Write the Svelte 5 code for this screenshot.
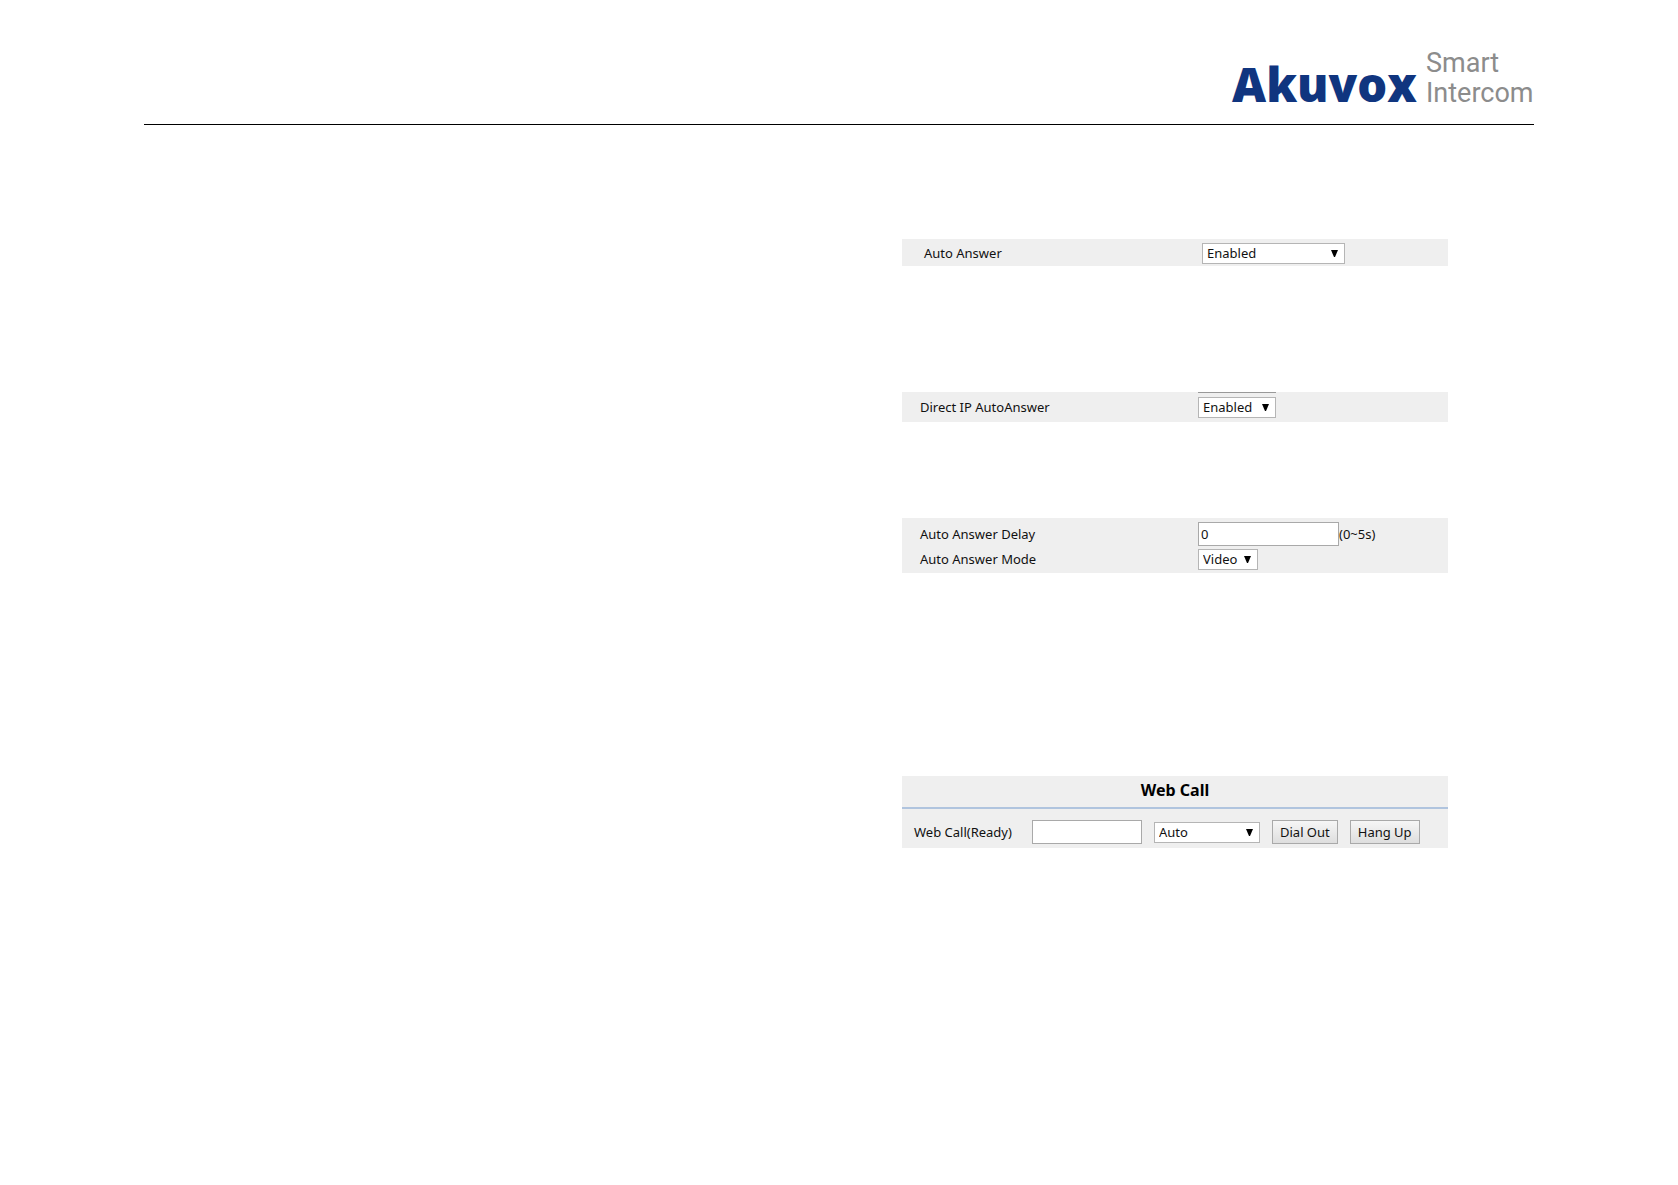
<script lang="ts">
	let autoAnswer = $state('Enabled');
	let directIp = $state('Enabled');
	let delay = $state('0');
	let mode = $state('Video');
	let callTarget = $state('');
	let account = $state('Auto');
</script>

{#snippet arrow()}
	<svg class="arrow" viewBox="0 0 7 7" aria-hidden="true">
		<path d="M0 0h7L4 7H3z" />
	</svg>
{/snippet}

<header class="page-header">
	<svg class="logo" viewBox="0 0 304 68" role="img" aria-label="Akuvox Smart Intercom">
		<text class="brand" x="2" y="58">Akuvox</text>
		<text class="tagline" x="196" y="28">Smart</text>
		<text class="tagline" x="196" y="58">Intercom</text>
	</svg>
</header>

<main class="content">
	<section class="panel auto-answer">
		<div class="row">
			<label for="auto-answer">Auto Answer</label>
			<span class="select wide">
				<select id="auto-answer" bind:value={autoAnswer}>
					<option>Enabled</option>
					<option>Disabled</option>
				</select>
				{@render arrow()}
			</span>
		</div>
	</section>

	<section class="panel direct-ip">
		<div class="edge"></div>
		<div class="row">
			<label for="direct-ip">Direct IP AutoAnswer</label>
			<span class="select medium">
				<select id="direct-ip" bind:value={directIp}>
					<option>Enabled</option>
					<option>Disabled</option>
				</select>
				{@render arrow()}
			</span>
		</div>
	</section>

	<section class="panel answer-options">
		<div class="row">
			<label for="delay">Auto Answer Delay</label>
			<span class="field">
				<input id="delay" type="text" bind:value={delay} />
				<span>(0~5s)</span>
			</span>
		</div>
		<div class="row">
			<label for="mode">Auto Answer Mode</label>
			<span class="select small">
				<select id="mode" bind:value={mode}>
					<option>Video</option>
					<option>Audio</option>
				</select>
				{@render arrow()}
			</span>
		</div>
	</section>

	<section class="panel web-call">
		<h2>Web Call</h2>
		<form class="call-row" onsubmit={(e) => e.preventDefault()}>
			<label for="call-target">Web Call(Ready)</label>
			<input id="call-target" type="text" bind:value={callTarget} />
			<span class="select account">
				<select aria-label="Account" bind:value={account}>
					<option>Auto</option>
					<option>Account1</option>
					<option>Account2</option>
				</select>
				{@render arrow()}
			</span>
			<button type="submit">Dial Out</button>
			<button type="button">Hang Up</button>
		</form>
	</section>
</main>

<style>
	:global(body) {
		margin: 0;
		background: #fff;
	}
	.page-header {
		display: flex;
		justify-content: flex-end;
		margin: 0 144px;
		padding: 44px 0 12px;
		border-bottom: 1px solid #000;
	}
	.logo {
		display: block;
		width: 304px;
		height: 68px;
		overflow: visible;
	}
	.brand {
		font-family: "Open Sans", sans-serif;
		font-size: 47px;
		font-weight: 800;
		fill: #10357f;
	}
	.tagline {
		font-family: Roboto, sans-serif;
		font-size: 27px;
		fill: #8c8c8c;
	}
	.content {
		width: 546px;
		margin: 114px 230px 0 auto;
		font-family: "Noto Sans", sans-serif;
		font-size: 13px;
		line-height: 19px;
		color: #111;
	}
	.panel {
		box-sizing: border-box;
		padding-left: 18px;
		background: #efefef;
	}
	.row {
		display: grid;
		grid-template-columns: 278px 1fr;
		align-items: center;
	}
	.auto-answer {
		padding: 4px 0 2px 22px;
		margin-bottom: 126px;
	}
	.direct-ip {
		padding-bottom: 4px;
		margin-bottom: 96px;
	}
	.edge {
		width: 78px;
		height: 1px;
		margin: 0 0 4px 278px;
		background: #999;
	}
	.answer-options {
		display: grid;
		gap: 3px;
		padding-top: 4px;
		padding-bottom: 3px;
		margin-bottom: 203px;
	}
	.field {
		display: flex;
		align-items: center;
	}
	.select {
		display: inline-grid;
		align-items: center;
	}
	.wide {
		width: 143px;
	}
	.medium {
		width: 78px;
	}
	.small {
		width: 60px;
	}
	.account {
		width: 106px;
	}
	select,
	.arrow {
		grid-area: 1 / 1;
	}
	select,
	input,
	button {
		box-sizing: border-box;
		margin: 0;
		font: inherit;
		color: inherit;
		border: 1px solid #a9a9a9;
		border-radius: 0;
	}
	select {
		appearance: none;
		width: 100%;
		height: 21px;
		padding: 0 4px;
		line-height: 19px;
		background: #fff;
		border-color: #b5b5b5;
	}
	.arrow {
		justify-self: end;
		width: 7px;
		height: 7px;
		margin-right: 7px;
		fill: #000;
		pointer-events: none;
	}
	input {
		width: 141px;
		height: 24px;
		padding: 0 2px;
		background: #fff;
	}
	.web-call {
		padding-left: 0;
	}
	h2 {
		margin: 0;
		padding: 3px 0 5px;
		font-size: 16px;
		line-height: 23px;
		text-align: center;
		color: #000;
		border-bottom: 2px solid #b0c4de;
	}
	.call-row {
		display: flex;
		align-items: center;
		gap: 12px;
		padding: 11px 0 4px 12px;
	}
	.call-row label {
		width: 106px;
	}
	.call-row input {
		width: 110px;
	}
	button {
		height: 24px;
		padding: 0 7px;
		line-height: 22px;
		white-space: nowrap;
		background: linear-gradient(#f6f6f6, #dedede);
	}
</style>
